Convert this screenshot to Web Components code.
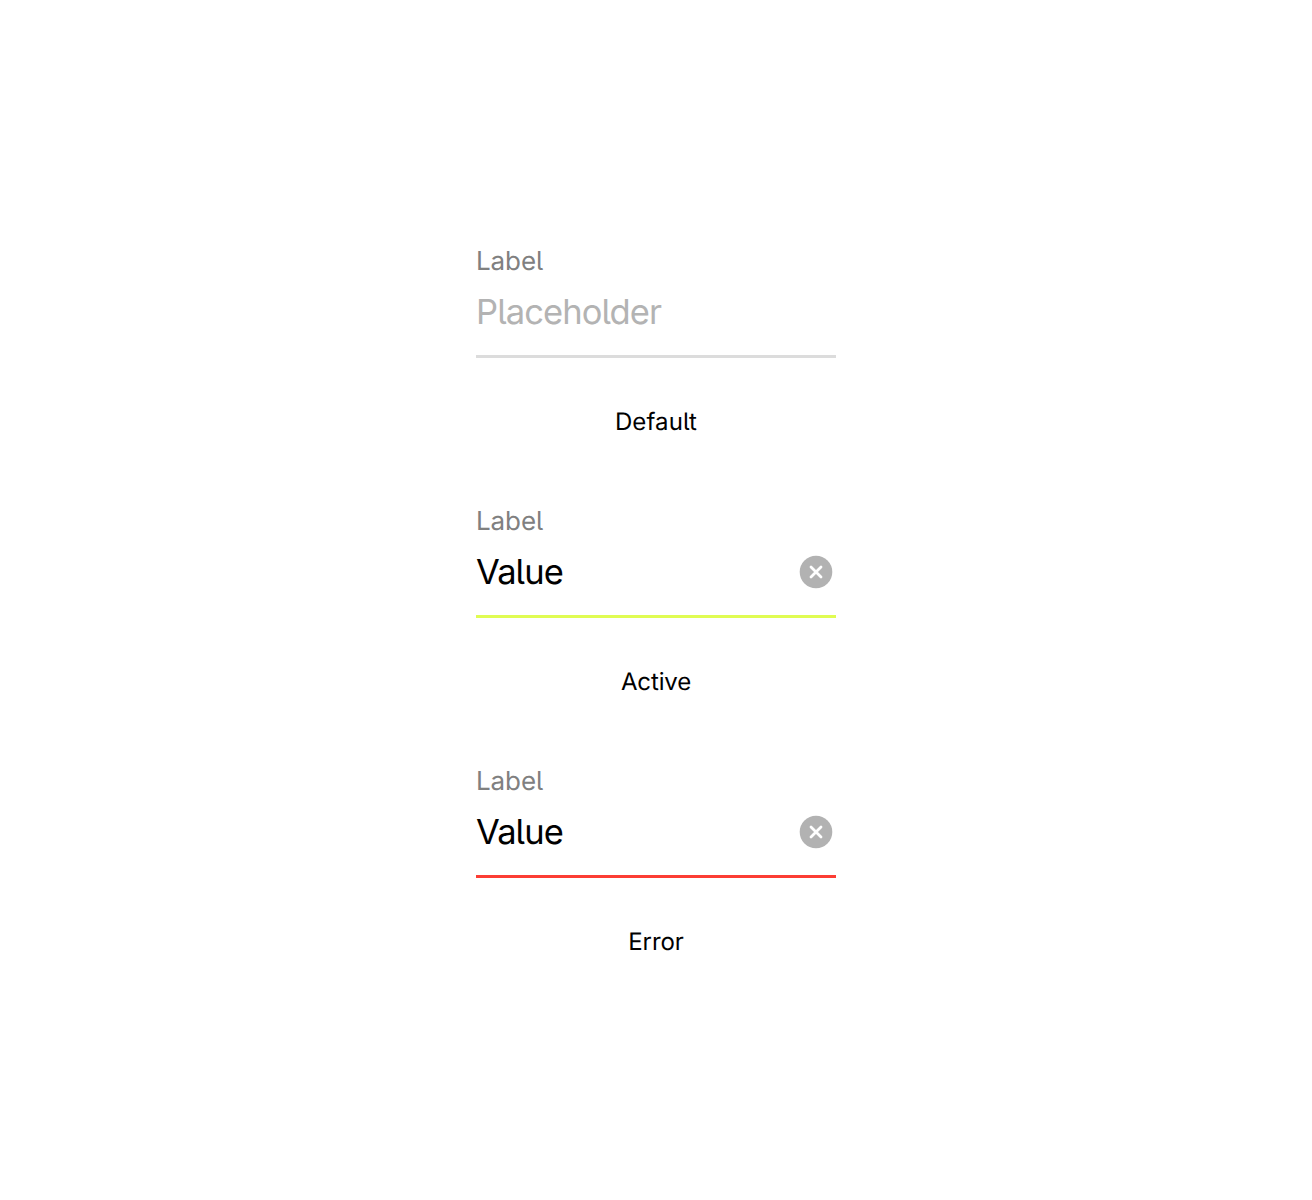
<!DOCTYPE html>
<html lang="en">
<head>
<meta charset="utf-8">
<title>Text field states</title>
<style>
  body { margin: 0; background: #fff; font-family: Inter, "Liberation Sans", sans-serif; font-weight: 375; font-feature-settings: "cv05" 1; text-rendering: geometricPrecision; }
</style>
</head>
<body>
<field-gallery>
  <field-example caption="Default" style="--caption-spacing:.12px"><text-field label="Label" placeholder="Placeholder"></text-field></field-example>
  <field-example caption="Active" style="--caption-spacing:-.12px"><text-field label="Label" value="Value" state="active"></text-field></field-example>
  <field-example caption="Error" style="--caption-spacing:-.05px"><text-field label="Label" value="Value" state="error"></text-field></field-example>
</field-gallery>
<script>
class ShadowElement extends HTMLElement {
  constructor() { super(); this.attachShadow({ mode: 'open' }); }
}
customElements.define('field-gallery', class extends ShadowElement {
  connectedCallback() {
    this.shadowRoot.innerHTML = `
      <style>
        :host { display: flex; flex-direction: column; align-items: center; box-sizing: border-box; height: 1200px; padding-top: 242px; gap: 60px; }
      </style><slot></slot>`;
  }
});
customElements.define('field-example', class extends ShadowElement {
  connectedCallback() {
    this.shadowRoot.innerHTML = `
      <style>
        :host { display: flex; flex-direction: column; width: 360px; height: 200px; gap: 48px; }
        .caption { text-align: center; font-size: 24px; line-height: 32px; color: #000; letter-spacing: var(--caption-spacing, 0); }
      </style><slot></slot><div class="caption"></div>`;
    this.shadowRoot.querySelector('.caption').textContent = this.getAttribute('caption');
  }
});
customElements.define('clear-button', class extends ShadowElement {
  connectedCallback() {
    this.shadowRoot.innerHTML = `
      <style>:host { display: block; width: 40px; height: 40px; } svg { display: block; }</style>
      <svg width="40" height="40" viewBox="0 0 40 40" fill="none">
        <circle cx="20" cy="20" r="16.3" fill="#b2b2b2"/>
        <path d="M15 15l10 10M25 15L15 25" stroke="#fff" stroke-width="2.8" stroke-linecap="round"/>
      </svg>`;
  }
});
customElements.define('text-field', class extends ShadowElement {
  connectedCallback() {
    const value = this.getAttribute('value');
    this.shadowRoot.innerHTML = `
      <style>
        :host { display: flex; flex-direction: column; box-sizing: border-box; height: 116px; border-bottom: 3px solid #dcdcdc; }
        :host([state=active]) { border-color: #e0fc52; }
        :host([state=error]) { border-color: #fc3d34; }
        .label { font-size: 26px; line-height: 40px; color: #808080; letter-spacing: -.1px; }
        .row { display: flex; align-items: center; justify-content: space-between; height: 40px; margin-top: 10px; }
        .text { padding-top: 2px; font-size: 34.5px; line-height: 40px; color: #000; letter-spacing: -.9px; }
        .placeholder { color: #b3b3b3; }
      </style>
      <div class="label"></div>
      <div class="row"><span class="text${value ? '' : ' placeholder'}"></span>${value ? '<clear-button></clear-button>' : ''}</div>`;
    this.shadowRoot.querySelector('.label').textContent = this.getAttribute('label');
    this.shadowRoot.querySelector('.text').textContent = value || this.getAttribute('placeholder');
  }
});
</script>
</body>
</html>
